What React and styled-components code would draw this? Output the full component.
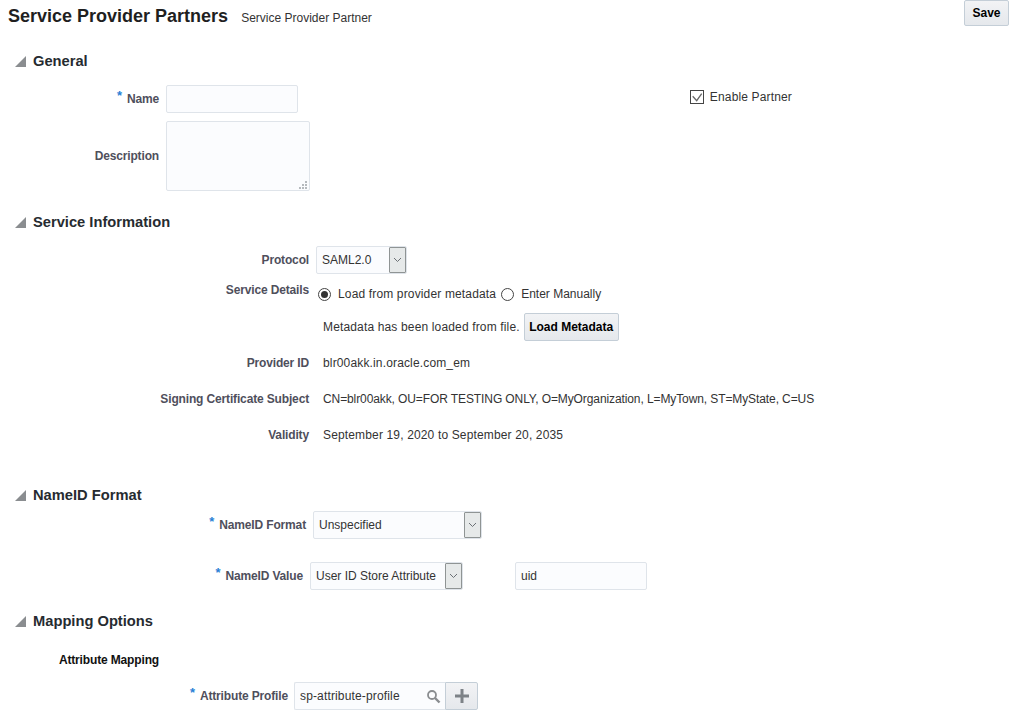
import React from "react";
import styled, { createGlobalStyle } from "styled-components";

const GlobalStyle = createGlobalStyle`
html, body {
  margin: 0;
  background: #fff;
  overflow: hidden;
}
body {
  font-family: "Liberation Sans", Arial, sans-serif;
  font-size: 12px;
  color: #333;
}
`;

const Page = styled.div`
  width: 1017px;
  height: 717px;
  overflow: hidden;
  box-sizing: border-box;
`;

const Header = styled.header`
  display: flex;
  align-items: flex-start;
  justify-content: space-between;
  padding: 0 8px;
  height: 26px;
`;

const TitleGroup = styled.div`
  display: flex;
  align-items: baseline;
  padding-top: 5px;
  gap: 13px;
`;

const Title = styled.h1`
  margin: 0;
  font-size: 18px;
  line-height: 22px;
  font-weight: 700;
  color: #1f1f1f;
`;

const Subtitle = styled.span`
  font-size: 12px;
  color: #333;
`;

const Button = styled.button`
  box-sizing: border-box;
  height: ${(p) => p.$height || 28}px;
  width: ${(p) => p.$width}px;
  padding: 0;
  font-family: inherit;
  font-size: 12px;
  font-weight: 700;
  color: #000;
  background: linear-gradient(#f2f3f5, #e5e8ec);
  border: 1px solid #c4ced7;
  border-radius: 2px;
`;

const SectionHead = styled.h2`
  display: flex;
  align-items: center;
  gap: 7px;
  margin: ${(p) => p.$top}px 0 0;
  padding-left: 15px;
  height: 20px;
  font-size: 14.7px;
  font-weight: 700;
  color: #262b30;
`;

const Row = styled.div`
  display: flex;
  align-items: ${(p) => p.$align || "center"};
  margin-top: ${(p) => p.$top}px;
  min-height: ${(p) => p.$height || 20}px;
`;

const Label = styled.label`
  box-sizing: border-box;
  flex: none;
  width: ${(p) => p.$width}px;
  margin-right: ${(p) => p.$gap ?? 7}px;
  padding-top: ${(p) => p.$pad || 0}px;
  text-align: right;
  font-size: 12px;
  font-weight: 700;
  letter-spacing: -0.15px;
  color: ${(p) => (p.$dark ? "#111" : "#4f4f5c")};
`;

const Required = styled.span`
  color: #2a7fd5;
  font-size: 13px;
  line-height: 0;
  position: relative;
  top: -3px;
  margin-right: 5px;
`;

const TextBox = styled.input`
  box-sizing: border-box;
  width: ${(p) => p.$width}px;
  height: 28px;
  padding: 0 5px;
  margin-left: ${(p) => p.$left || 0}px;
  font-family: inherit;
  font-size: 12px;
  color: #333;
  background: #fbfcfe;
  border: 1px solid #dfe4ea;
  border-radius: 2px;
  outline: none;
`;

const AreaWrap = styled.div`
  position: relative;
  width: 144px;
  height: 70px;
`;

const TextArea = styled.textarea`
  box-sizing: border-box;
  display: block;
  width: 144px;
  height: 70px;
  background: #fbfcfe;
  border: 1px solid #dfe4ea;
  border-radius: 2px;
  resize: none;
  outline: none;
`;

const Grip = styled.svg`
  position: absolute;
  right: 3px;
  bottom: 2px;
`;

const SelectBox = styled.div`
  box-sizing: border-box;
  display: flex;
  align-items: center;
  justify-content: space-between;
  width: ${(p) => p.$width}px;
  height: 28px;
  padding-left: 5px;
  background: #fbfcfe;
  border: 1px solid #dfe4ea;
  border-radius: 2px;
  color: #333;
`;

const SelectArrow = styled.span`
  box-sizing: border-box;
  display: flex;
  align-items: center;
  justify-content: center;
  width: 17px;
  height: 26px;
  background: #e6e9e9;
  border: 1px solid #8f9494;
  border-radius: 1px;
`;

const Value = styled.span`
  font-size: 12px;
  color: #333;
  letter-spacing: ${(p) => p.$spacing ?? 0.15}px;
`;

const Hint = styled(Value)`
  margin: 0 4px 0 ${(p) => p.$left || 0}px;
`;

const ChoiceGroup = styled.div`
  display: flex;
  align-items: center;
  padding: 5px 0 0 2px;
  gap: 5px;
`;

const Choice = styled.span`
  display: inline-flex;
  align-items: center;
  gap: 7px;
  font-size: 12px;
  letter-spacing: ${(p) => p.$spacing ?? 0.15}px;
  color: #333;
`;

const CheckWrap = styled.div`
  flex: none;
  align-self: flex-start;
  display: flex;
  align-items: center;
  gap: 6px;
  margin-left: auto;
  margin-right: 225px;
  padding-top: 5px;
  font-size: 12px;
  letter-spacing: 0.15px;
  color: #333;
`;

const LookupBox = styled(SelectBox)`
  border-right: none;
  border-radius: 2px 0 0 2px;
  padding-right: 4px;
  letter-spacing: 0.15px;
`;

const AddButton = styled.button`
  box-sizing: border-box;
  display: flex;
  align-items: center;
  justify-content: center;
  width: 33px;
  height: 28px;
  padding: 0;
  background: linear-gradient(#f2f3f5, #e5e8ec);
  border: 1px solid #c4ced7;
  border-radius: 0 2px 2px 0;
`;

const Triangle = () => (
  <svg width="11" height="11" viewBox="0 0 11 11">
    <path d="M11 0V11H0Z" fill="#8a8d90" />
  </svg>
);

const Chevron = () => (
  <svg width="9" height="6" viewBox="0 0 9 6">
    <path d="M1 1l3.500 3.500L8 1" fill="none" stroke="#6b7075" strokeWidth="1" />
  </svg>
);

const Select = ({ width, children }) => (
  <SelectBox $width={width}>
    <span>{children}</span>
    <SelectArrow>
      <Chevron />
    </SelectArrow>
  </SelectBox>
);

const Radio = ({ on }) => (
  <svg width="13" height="13" viewBox="0 0 13 13">
    <circle cx="6.500" cy="6.500" r="6" fill="#fff" stroke="#444" strokeWidth="1" />
    {on && <circle cx="6.500" cy="6.500" r="3.500" fill="#333" />}
  </svg>
);

const Section = ({ top, children }) => (
  <SectionHead $top={top}>
    <Triangle />
    {children}
  </SectionHead>
);

export default function App() {
  return (
    <Page>
      <GlobalStyle />
      <Header>
        <TitleGroup>
          <Title>Service Provider Partners</Title>
          <Subtitle>Service Provider Partner</Subtitle>
        </TitleGroup>
        <Button $height={26} $width={45}>Save</Button>
      </Header>

      <Section top={25}>General</Section>
      <Row $top={14} $height={28}>
        <Label $width={159}><Required>*</Required>Name</Label>
        <TextBox $width={132} />
        <CheckWrap>
          <svg width="14" height="14" viewBox="0 0 14 14">
            <rect x="0.500" y="0.500" width="13" height="13" fill="#fff" stroke="#444" />
            <path d="M2.700 6.300l4 4.300 5-7" fill="none" stroke="#666" strokeWidth="1.300" />
          </svg>
          Enable Partner
        </CheckWrap>
      </Row>
      <Row $top={8} $height={70}>
        <Label $width={159}>Description</Label>
        <AreaWrap>
          <TextArea />
          <Grip width="9" height="9" viewBox="0 0 9 9">
            <path d="M7 1h2v2H7zM4 4h2v2H4zM7 4h2v2H7zM1 7h2v2H1zM4 7h2v2H4zM7 7h2v2H7z" fill="#b5b9bd" />
          </Grip>
        </AreaWrap>
      </Row>

      <Section top={21}>Service Information</Section>
      <Row $top={14} $height={28}>
        <Label $width={309}>Protocol</Label>
        <Select width={91}>SAML2.0</Select>
      </Row>
      <Row $top={8} $height={24} $align="flex-start">
        <Label $width={309} $pad={1}>Service Details</Label>
        <ChoiceGroup>
          <Choice><Radio on />Load from provider metadata</Choice>
          <Choice $spacing={0}><Radio />Enter Manually</Choice>
        </ChoiceGroup>
      </Row>
      <Row $top={7} $height={28}>
        <Hint $left={323}>Metadata has been loaded from file.</Hint>
        <Button $width={95}>Load Metadata</Button>
      </Row>
      <Row $top={12}>
        <Label $width={309} $gap={14}>Provider ID</Label>
        <Value>blr00akk.in.oracle.com_em</Value>
      </Row>
      <Row $top={16}>
        <Label $width={309} $gap={14}>Signing Certificate Subject</Label>
        <Value $spacing={-0.1}>CN=blr00akk, OU=FOR TESTING ONLY, O=MyOrganization, L=MyTown, ST=MyState, C=US</Value>
      </Row>
      <Row $top={16}>
        <Label $width={309} $gap={14}>Validity</Label>
        <Value>September 19, 2020 to September 20, 2035</Value>
      </Row>

      <Section top={40}>NameID Format</Section>
      <Row $top={6} $height={28}>
        <Label $width={306}><Required>*</Required>NameID Format</Label>
        <Select width={169}>Unspecified</Select>
      </Row>
      <Row $top={23} $height={28}>
        <Label $width={303}><Required>*</Required>NameID Value</Label>
        <Select width={153}>User ID Store Attribute</Select>
        <TextBox $width={132} $left={52} defaultValue="uid" />
      </Row>

      <Section top={21}>Mapping Options</Section>
      <Row $top={19}>
        <Label $width={159} $gap={0} $dark>Attribute Mapping</Label>
      </Row>
      <Row $top={12} $height={28}>
        <Label $width={288} $gap={6}><Required>*</Required>Attribute Profile</Label>
        <LookupBox $width={151}>
          <span>sp-attribute-profile</span>
          <svg width="15" height="15" viewBox="0 0 15 15">
            <circle cx="6" cy="6" r="4" fill="none" stroke="#8a8d90" strokeWidth="1.800" />
            <path d="M9 9l4.500 4.500" stroke="#8a8d90" strokeWidth="2.400" />
          </svg>
        </LookupBox>
        <AddButton aria-label="Add">
          <svg width="14" height="14" viewBox="0 0 14 14">
            <path d="M5.500 0h3v5.500H14v3H8.500V14h-3V8.500H0v-3h5.500z" fill="#7d8287" />
          </svg>
        </AddButton>
      </Row>
    </Page>
  );
}
